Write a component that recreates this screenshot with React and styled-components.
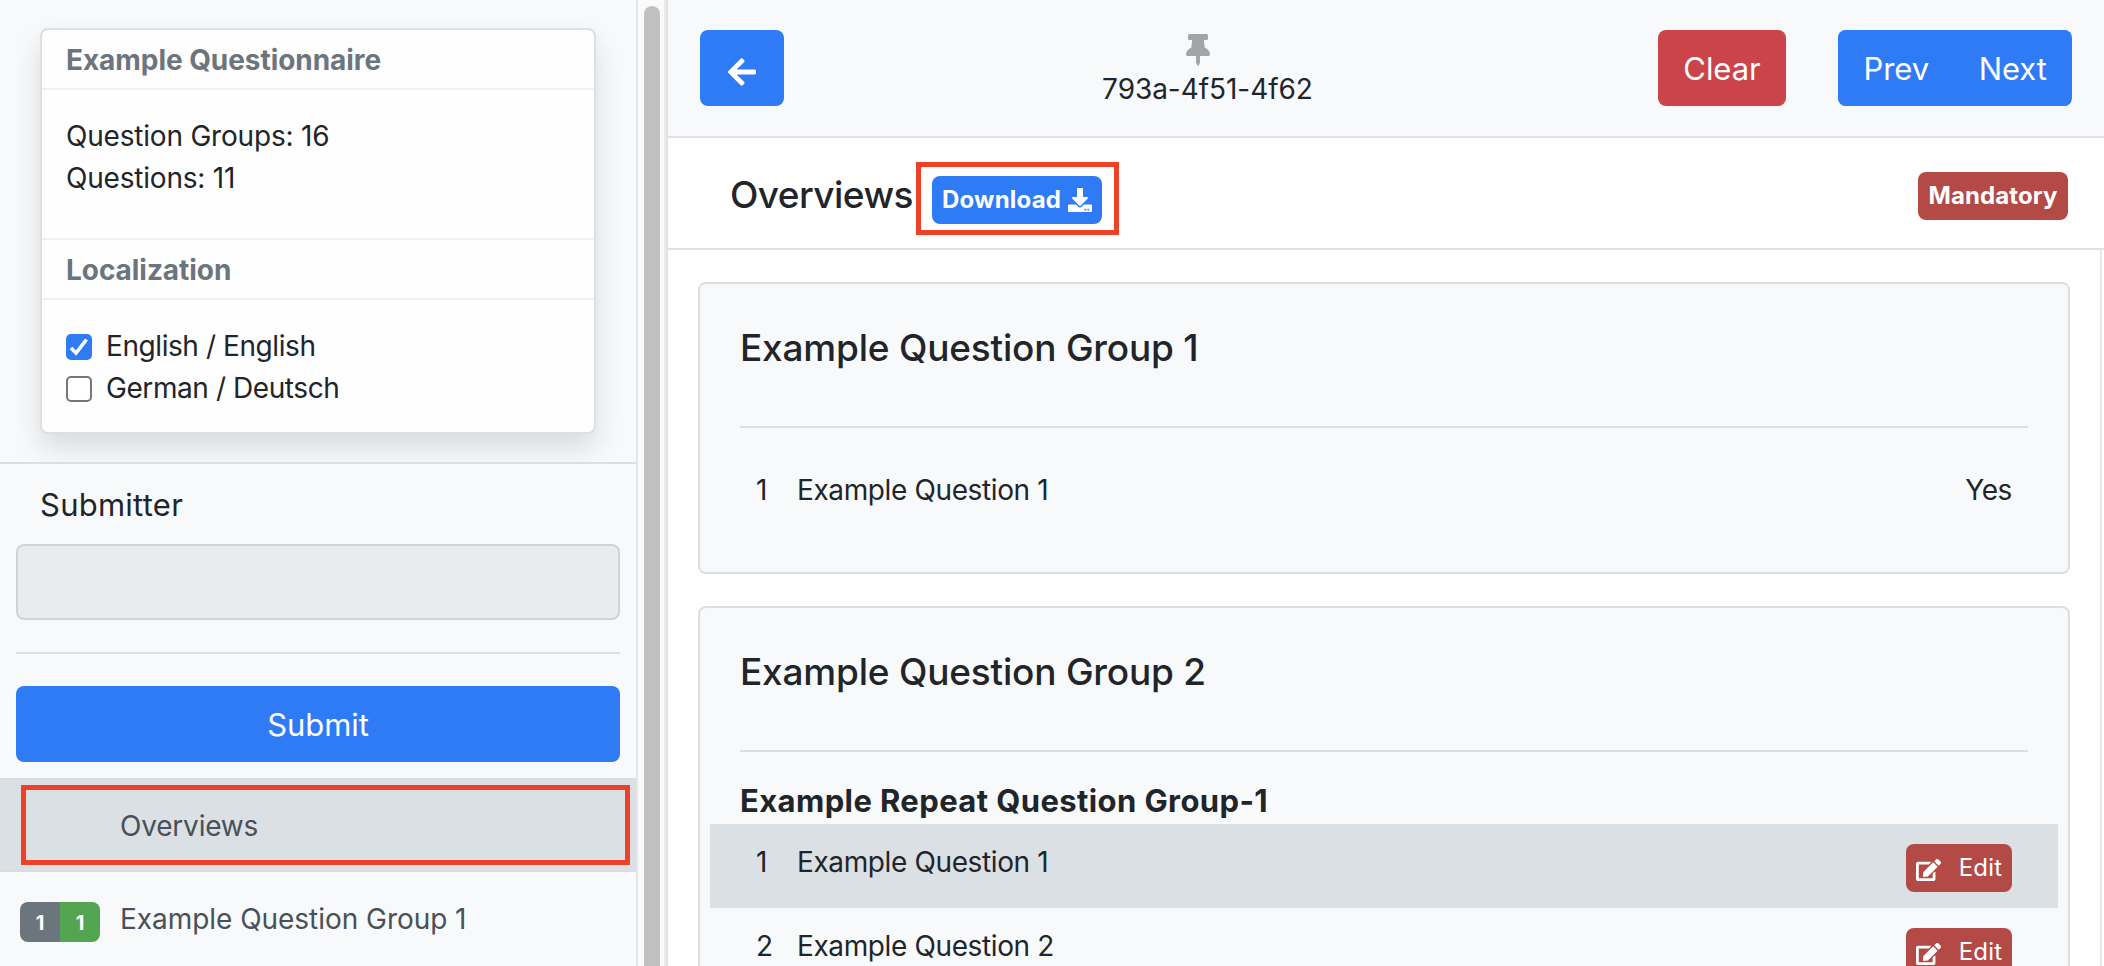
import React from "react";
import styled, { createGlobalStyle } from "styled-components";
import { FaArrowLeft, FaThumbtack, FaDownload, FaEdit } from "react-icons/fa";

const Global = createGlobalStyle`
  * { box-sizing: border-box; }
  body {
    margin: 0;
    font-family: Inter, "Liberation Sans", sans-serif;
    font-size: 28px;
    line-height: 42px;
    color: #212529;
    background: #fff;
  }
  h1, h2, h3, p { margin: 0; font-weight: 400; }
  button { font-family: inherit; border: 0; padding: 0; }
`;

const Page = styled.div`
  display: flex;
  height: 966px;
  overflow: hidden;
`;

const Sidebar = styled.aside`
  width: 638px;
  flex: none;
  background: #f8f9fb;
  border-right: 2px solid #e5e6e7;
`;

const InfoWrap = styled.div`
  height: 464px;
  padding: 28px 40px 0;
  border-bottom: 2px solid #dcdee0;
  overflow: hidden;
`;

const InfoCard = styled.section`
  height: 406px;
  border: 2px solid #dddfe2;
  border-radius: 8px;
  background: #fefefe;
  box-shadow: 0 14px 28px rgba(0, 0, 0, 0.12);
`;

const InfoHeader = styled.h3`
  height: 60px;
  padding: 9px 24px 0;
  border-bottom: 2px solid #f0f0f0;
  font-weight: 700;
  font-size: 28px;
  letter-spacing: -0.05px;
  color: #6c757d;
`;

const InfoBody = styled.div`
  padding: 25px 24px 0;
  height: ${(p) => p.$height}px;
  border-bottom: ${(p) => (p.$line ? "2px solid #f0f0f0" : "0")};
  letter-spacing: -0.2px;
`;

const CheckLine = styled.label`
  display: flex;
  align-items: center;
  gap: 14px;
  letter-spacing: -0.42px;
`;

const Box = styled.span`
  display: flex;
  width: 26px;
  height: 26px;
  margin-top: 1px;
  border-radius: 5px;
  border: ${(p) => (p.$on ? "0" : "2px solid #767676")};
  background: ${(p) => (p.$on ? "#2f7bf6" : "#fff")};
`;

const Submitter = styled.div`
  padding: 19px 16px 0;
  height: 314px;
`;

const FieldLabel = styled.h3`
  padding-left: 24px;
  font-size: 31px;
  line-height: 44px;
  letter-spacing: 0.25px;
`;

const Field = styled.div`
  height: 76px;
  margin-top: 17px;
  border: 2px solid #ced4da;
  border-radius: 8px;
  background: #e9ebef;
`;

const Rule = styled.hr`
  height: 2px;
  border: 0;
  background: #dcdee0;
  margin: ${(p) => p.$gap} 0;
`;

const Button = styled.button`
  display: ${(p) => (p.$block ? "block" : "inline-flex")};
  align-items: center;
  justify-content: center;
  width: ${(p) => p.$width || "100%"};
  height: 76px;
  border-radius: 8px;
  background: ${(p) => (p.$danger ? "#cb444a" : "#2f7bf6")};
  color: #fff;
  font-size: 31px;
  letter-spacing: -0.05px;
`;

const NavItem = styled.div`
  position: relative;
  display: flex;
  align-items: center;
  height: 94px;
  padding: ${(p) => (p.$active ? "2px" : "0")} 0 0 20px;
  color: #495057;
  letter-spacing: ${(p) => (p.$active ? "-0.2px" : "-0.04px")};
  background: ${(p) => (p.$active ? "#dbe0e4" : "transparent")};
  box-shadow: ${(p) =>
    p.$active ? "inset 0 2px #dadcde, inset 0 -2px #dadcde" : "none"};
`;

const Counts = styled.div`
  display: flex;
  width: 100px;
  height: 40px;
  margin-top: 6px;
`;

const Count = styled.span`
  width: 40px;
  line-height: 42px;
  text-align: center;
  font-size: 20px;
  font-weight: 700;
  color: #fff;
  background: ${(p) => (p.$done ? "#53a551" : "#6c757d")};
  border-radius: ${(p) => (p.$done ? "0 8px 8px 0" : "8px 0 0 8px")};
`;

const NavHighlight = styled.span`
  position: absolute;
  inset: 7px 6px 7px 21px;
  border: 5px solid #ee4127;
`;

const Track = styled.div`
  width: 30px;
  flex: none;
  padding: 6px 6px 0;
  background: #fafafa;
  border-right: 2px solid #dee2e6;
  box-shadow: inset -2px 0 #ebebeb;
`;

const Thumb = styled.div`
  width: 16px;
  height: 980px;
  border-radius: 8px;
  background: #c1c1c1;
`;

const Main = styled.main`
  flex: 1;
  min-width: 0;
  display: flex;
  flex-direction: column;
`;

const TopBar = styled.header`
  display: flex;
  align-items: flex-start;
  height: 138px;
  padding: 30px 32px 0;
  background: #f8f9fb;
  border-bottom: 2px solid #dee2e6;
`;

const BackArrow = styled(FaArrowLeft)`
  margin-top: 8px;
  font-size: 32px;
`;

const Ident = styled.div`
  flex: 1;
  display: flex;
  flex-direction: column;
  align-items: center;
  padding: 4px 28px 0 0;
`;

const Pin = styled(FaThumbtack)`
  width: 24px;
  height: 32px;
  margin-right: 18px;
  color: #a0a5a9;
`;

const IdentText = styled.p`
  margin: 2px 0 0 1px;
  letter-spacing: -0.05px;
`;

const Actions = styled.div`
  display: flex;
  gap: 52px;
`;

const ButtonGroup = styled.div`
  display: flex;
  width: 234px;
  padding-right: 1px;
  border-radius: 8px;
  overflow: hidden;
  background: #2f7bf6;
  ${Button} { border-radius: 0; }
`;

const TitleBar = styled.div`
  display: flex;
  align-items: flex-start;
  height: 112px;
  padding: 24px 36px 0 62px;
  border-bottom: 2px solid #dee2e6;
`;

const Title = styled.h2`
  width: 182px;
  margin-top: 12px;
  font-size: 37px;
  line-height: 42px;
  font-weight: 500;
  letter-spacing: -0.55px;
  white-space: nowrap;
`;

const DownloadFrame = styled.div`
  height: 73px;
  width: 203px;
  margin-left: 4px;
  padding: 9px 0 0 11px;
  border: 5px solid #ee4127;
`;

const Tag = styled.span`
  display: flex;
  align-items: center;
  justify-content: center;
  gap: 7px;
  height: 48px;
  width: ${(p) => p.$width}px;
  border-radius: 8px;
  background: ${(p) => (p.$danger ? "#b34a45" : "#2f7bf6")};
  color: #fff;
  font-size: 24px;
  font-weight: ${(p) => (p.$light ? 400 : 700)};
  letter-spacing: 0.2px;
`;

const Mandatory = styled(Tag)`
  margin: 10px 0 0 auto;
  letter-spacing: 0.1px;
`;

const Scroll = styled.div`
  flex: 1;
  min-height: 0;
  overflow: hidden;
  display: flex;
  flex-direction: column;
  gap: 32px;
  margin-right: 2px;
  padding: 32px 30px 0;
  border-right: 2px solid #e7e7e7;
`;

const GroupCard = styled.section`
  flex: none;
  height: ${(p) => p.$height}px;
  padding: 42px 10px 0;
  background: #f8f9fb;
  border: 2px solid #dcdee0;
  border-radius: 8px;
`;

const GroupTitle = styled.h2`
  margin: 0 30px;
  height: 100px;
  font-size: 37px;
  line-height: 44px;
  font-weight: 500;
  letter-spacing: -0.2px;
`;

const GroupRule = styled(Rule)`
  margin: 0 30px ${(p) => p.$gap};
`;

const RepeatTitle = styled.h3`
  margin: 0 30px;
  height: 52px;
  font-size: 31px;
  line-height: 57px;
  font-weight: 700;
  letter-spacing: 0.4px;
`;

const Row = styled.div`
  display: grid;
  grid-template-columns: 41px 1fr auto;
  height: 84px;
  padding: 20px 46px 0;
  letter-spacing: -0.38px;
  background: ${(p) => (p.$shade ? "#dbe0e4" : "transparent")};
`;

const RowText = styled.span`
  line-height: 37px;
`;

const EditIcon = styled(FaEdit)`
  width: 25px;
  height: 24px;
  margin: 4px 11px 0 0;
`;

function QuestionRow({ n, shade, edit, children }) {
  return (
    <Row $shade={shade}>
      <RowText>{n}</RowText>
      <RowText>Example Question {n}</RowText>
      {edit ? (
        <Tag $danger $light $width={106}>
          <EditIcon />
          Edit
        </Tag>
      ) : (
        <RowText>{children}</RowText>
      )}
    </Row>
  );
}

export default function App() {
  return (
    <Page>
      <Global />
      <Sidebar>
        <InfoWrap>
          <InfoCard>
            <InfoHeader>Example Questionnaire</InfoHeader>
            <InfoBody $height={150} $line>
              <p>Question Groups: 16</p>
              <p>Questions: 11</p>
            </InfoBody>
            <InfoHeader>Localization</InfoHeader>
            <InfoBody $height={132}>
              <CheckLine>
                <Box $on>
                  <svg width="26" height="26" viewBox="0 0 26 26" fill="none" stroke="#fff" strokeWidth="3.6">
                    <path d="M5 14l5 5L20.5 5.5" />
                  </svg>
                </Box>
                English / English
              </CheckLine>
              <CheckLine>
                <Box />
                German / Deutsch
              </CheckLine>
            </InfoBody>
          </InfoCard>
        </InfoWrap>
        <Submitter>
          <FieldLabel>Submitter</FieldLabel>
          <Field />
          <Rule $gap="32px" />
          <Button $block>Submit</Button>
        </Submitter>
        <NavItem $active>
          <Counts />
          Overviews
          <NavHighlight />
        </NavItem>
        <NavItem>
          <Counts>
            <Count>1</Count>
            <Count $done>1</Count>
          </Counts>
          Example Question Group 1
        </NavItem>
      </Sidebar>
      <Track>
        <Thumb />
      </Track>
      <Main>
        <TopBar>
          <Button $width="84px">
            <BackArrow />
          </Button>
          <Ident>
            <Pin />
            <IdentText>793a-4f51-4f62</IdentText>
          </Ident>
          <Actions>
            <Button $danger $width="128px">Clear</Button>
            <ButtonGroup>
              <Button>Prev</Button>
              <Button>Next</Button>
            </ButtonGroup>
          </Actions>
        </TopBar>
        <TitleBar>
          <Title>Overviews</Title>
          <DownloadFrame>
            <Tag $width={170}>
              Download
              <FaDownload />
            </Tag>
          </DownloadFrame>
          <Mandatory $danger $width={150}>Mandatory</Mandatory>
        </TitleBar>
        <Scroll>
          <GroupCard $height={292}>
            <GroupTitle>Example Question Group 1</GroupTitle>
            <GroupRule $gap="24px" />
            <QuestionRow n={1}>Yes</QuestionRow>
          </GroupCard>
          <GroupCard $height={500}>
            <GroupTitle>Example Question Group 2</GroupTitle>
            <GroupRule $gap="20px" />
            <RepeatTitle>Example Repeat Question Group-1</RepeatTitle>
            <QuestionRow n={1} shade edit />
            <QuestionRow n={2} edit />
          </GroupCard>
        </Scroll>
      </Main>
    </Page>
  );
}
